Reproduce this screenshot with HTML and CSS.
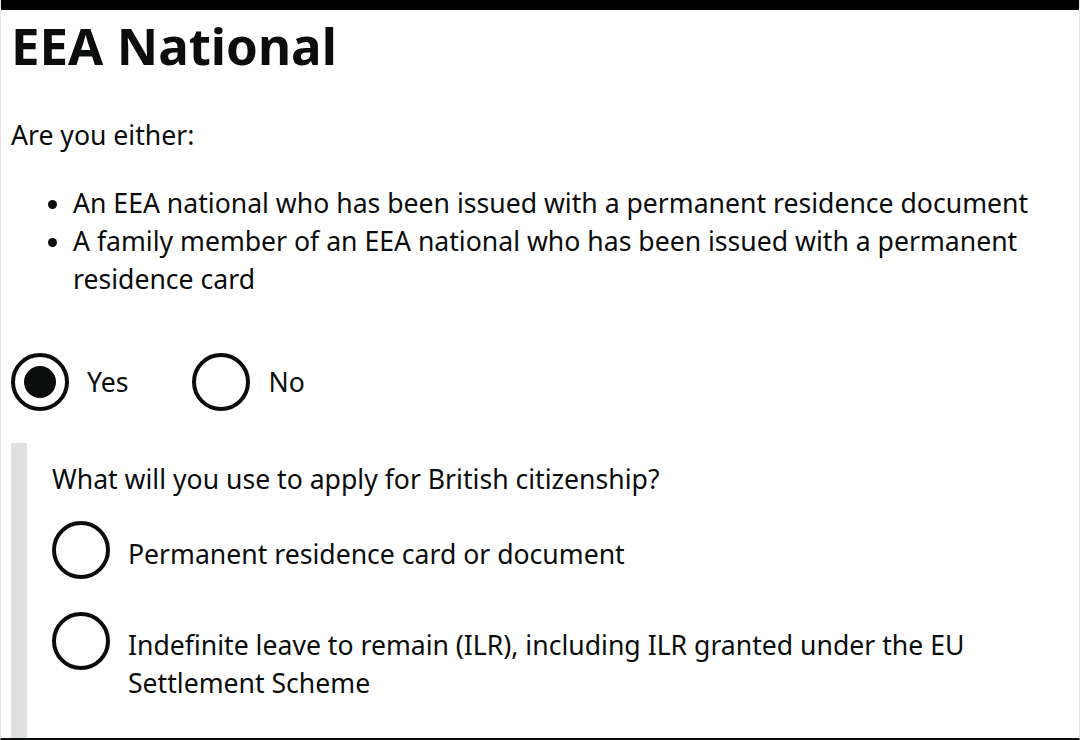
FILE: index.html
```html
<!DOCTYPE html>
<html lang="en">
<head>
<meta charset="utf-8">
<link rel="stylesheet" href="styles.css">
<title>EEA National</title>
</head>
<body>
<div class="page">
  <div class="topbar"></div>
  <main class="content">
    <h1 class="heading">EEA National</h1>
    <p class="body">Are you either:</p>
    <ul class="list">
      <li>An EEA national who has been issued with a permanent residence document</li>
      <li>A family member of an EEA national who has been issued with a permanent residence card</li>
    </ul>
    <div class="radios inline">
      <label class="radio"><span class="circle checked"></span><span class="label">Yes</span></label>
      <label class="radio"><span class="circle"></span><span class="label">No</span></label>
    </div>
    <div class="conditional">
      <p class="body question">What will you use to apply for British citizenship?</p>
      <div class="radios stacked">
        <label class="radio"><span class="circle"></span><span class="label">Permanent residence card or document</span></label>
        <label class="radio"><span class="circle"></span><span class="label">Indefinite leave to remain (ILR), including ILR granted under the EU Settlement Scheme</span></label>
      </div>
    </div>
  </main>
</div>
</body>
</html>
```
FILE: styles.css
```css
* { box-sizing: border-box; }
html, body { margin: 0; padding: 0; }
body {
  width: 1080px;
  height: 740px;
  overflow: hidden;
  background: #fff;
  font-family: "Noto Sans", "Open Sans", sans-serif;
  color: #0b0c0c;
}
.page {
  height: 740px;
  display: flex;
  flex-direction: column;
  border-left: 1px solid #e6e6e6;
  border-right: 1px solid #e6e6e6;
  border-bottom: 2px solid #0b0c0c;
}
.topbar { height: 10px; background: #000; flex: none; }
.content {
  flex: 1;
  padding: 0 20px 0 10px;
  display: flex;
  flex-direction: column;
}
.heading {
  margin: 6px 0 0;
  font-size: 51px;
  line-height: 58px;
  font-weight: 700;
}
.body {
  font-size: 26.6px;
  line-height: 38px;
  margin: 0;
}
.content > .body { margin-top: 42px; }
.list {
  margin: 30px 0 0;
  padding-left: 62px;
  font-size: 26.6px;
  line-height: 38px;
}
.radios.inline {
  display: flex;
  gap: 64px;
  margin-top: 55px;
}
.radio {
  display: flex;
  align-items: flex-start;
  font-size: 26.6px;
  line-height: 38px;
}
.circle {
  flex: none;
  width: 58px;
  height: 58px;
  border: 4px solid #0b0c0c;
  border-radius: 50%;
  position: relative;
}
.circle.checked::after {
  content: "";
  position: absolute;
  left: 9px;
  top: 9px;
  width: 32px;
  height: 32px;
  border-radius: 50%;
  background: #0b0c0c;
}
.label { padding: 10px 0 0 18px; }
.stacked .label { padding-top: 14px; }
.conditional {
  flex: 1;
  margin-top: 32px;
  border-left: 16px solid #dee0e2;
  padding-left: 25px;
  padding-top: 17px;
}
.radios.stacked {
  display: flex;
  flex-direction: column;
  gap: 33px;
  margin-top: 23px;
}
```
